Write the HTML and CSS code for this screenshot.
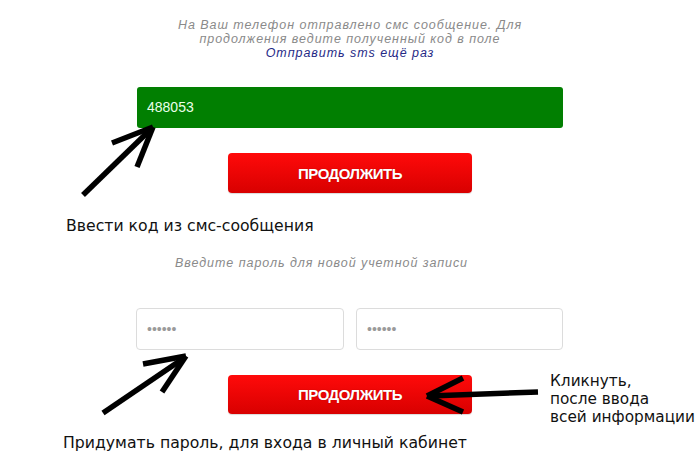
FILE: index.html
```html
<!DOCTYPE html>
<html lang="ru">
<head>
<meta charset="utf-8">
<title>Регистрация</title>
<link rel="stylesheet" href="styles.css">
</head>
<body>
<div class="page">
  <div class="intro">
    <p class="hint">На Ваш телефон отправлено смс сообщение. Для<br>продолжения ведите полученный код в поле</p>
    <a class="resend" href="#">Отправить sms ещё раз</a>
  </div>

  <div class="code-field">488053</div>

  <div class="btn-row"><button class="btn">ПРОДОЛЖИТЬ</button></div>

  <p class="note note-code">Ввести код из смс-сообщения</p>

  <p class="hint hint-pass">Введите пароль для новой учетной записи</p>

  <div class="pass-row">
    <input class="pass" type="text" placeholder="••••••">
    <input class="pass" type="text" placeholder="••••••">
  </div>

  <div class="cta-row">
    <button class="btn">ПРОДОЛЖИТЬ</button>
    <p class="note note-click">Кликнуть,<br>после ввода<br>всей информации</p>
  </div>

  <p class="note note-pass">Придумать пароль, для входа в личный кабинет</p>

  <svg class="arrows" width="700" height="462" viewBox="0 0 700 462" aria-hidden="true">
    <g stroke="#000" stroke-width="5.5" fill="none" stroke-linecap="butt">
      <line x1="83" y1="195" x2="151" y2="129"/>
      <line x1="112" y1="143" x2="153" y2="127"/>
      <line x1="137" y1="167" x2="153" y2="127"/>

      <line x1="103" y1="413" x2="184" y2="358"/>
      <line x1="143" y1="364" x2="186" y2="356"/>
      <line x1="162" y1="392" x2="186" y2="356"/>

      <line x1="538" y1="392" x2="429" y2="396"/>
      <line x1="463" y1="378" x2="427" y2="396"/>
      <line x1="463" y1="412" x2="427" y2="396"/>
    </g>
  </svg>
</div>
</body>
</html>
```

FILE: styles.css
```css
* { box-sizing: border-box; }
html, body { margin: 0; padding: 0; background: #fff; }
.page {
  position: relative;
  width: 700px;
  height: 462px;
  overflow: hidden;
  font-family: "Liberation Sans", Arial, sans-serif;
}
p { margin: 0; }

.intro {
  padding-top: 18px;
  text-align: center;
  line-height: 14px;
}
.hint {
  font-style: italic;
  color: #8a8a8a;
  font-size: 12.5px;
  letter-spacing: 0.95px;
}
.resend {
  display: block;
  font-style: italic;
  font-size: 12.5px;
  letter-spacing: 0.95px;
  color: #262a86;
  text-decoration: none;
}

.code-field {
  margin: 27px 0 0 137px;
  width: 426px;
  height: 41px;
  background: #017f01;
  border-radius: 3px;
  color: #eaffea;
  font-size: 14px;
  line-height: 41px;
  padding-left: 10px;
}

.btn-row { margin: 25px 0 0 228px; }
.btn {
  display: block;
  width: 244px;
  height: 40px;
  border: 0;
  border-radius: 4px;
  background: linear-gradient(#ff0a0a, #d80000);
  color: #fff;
  font-family: "Liberation Sans", Arial, sans-serif;
  font-weight: bold;
  font-size: 15px;
  letter-spacing: -0.5px;
  text-shadow: 0 0 1px rgba(120,0,0,0.6);
  box-shadow: 0 1px 1px rgba(0,0,0,0.15);
  padding: 0;
}

.note {
  font-family: "DejaVu Sans", Verdana, sans-serif;
  font-size: 15.7px;
  line-height: 20px;
  color: #111;
}
.note-code { margin: 23px 0 0 66px; }

.hint-pass {
  margin: 19px 0 0 175px;
  line-height: 16px;
}

.pass-row {
  margin: 37px 0 0 136px;
  display: flex;
  gap: 12px;
}
.pass {
  width: 208px;
  height: 42px;
  border: 1px solid #dcdcdc;
  border-radius: 4px;
  background: #fff;
  padding: 0 0 0 10px;
  font-family: "Liberation Sans", Arial, sans-serif;
  font-size: 14px;
  outline: none;
}
.pass + .pass { width: 207px; }
.pass::placeholder { color: #9a9a9a; }

.cta-row {
  margin: 25px 0 0 228px;
  display: flex;
  align-items: flex-start;
  height: 39px;
}
.cta-row .btn { height: 39px; }
.note-click {
  margin: -3px 0 0 78px;
  font-size: 15.3px;
  line-height: 18px;
}
.note-pass { margin: 19px 0 0 63px; }

.arrows {
  position: absolute;
  left: 0;
  top: 0;
  pointer-events: none;
}
```
